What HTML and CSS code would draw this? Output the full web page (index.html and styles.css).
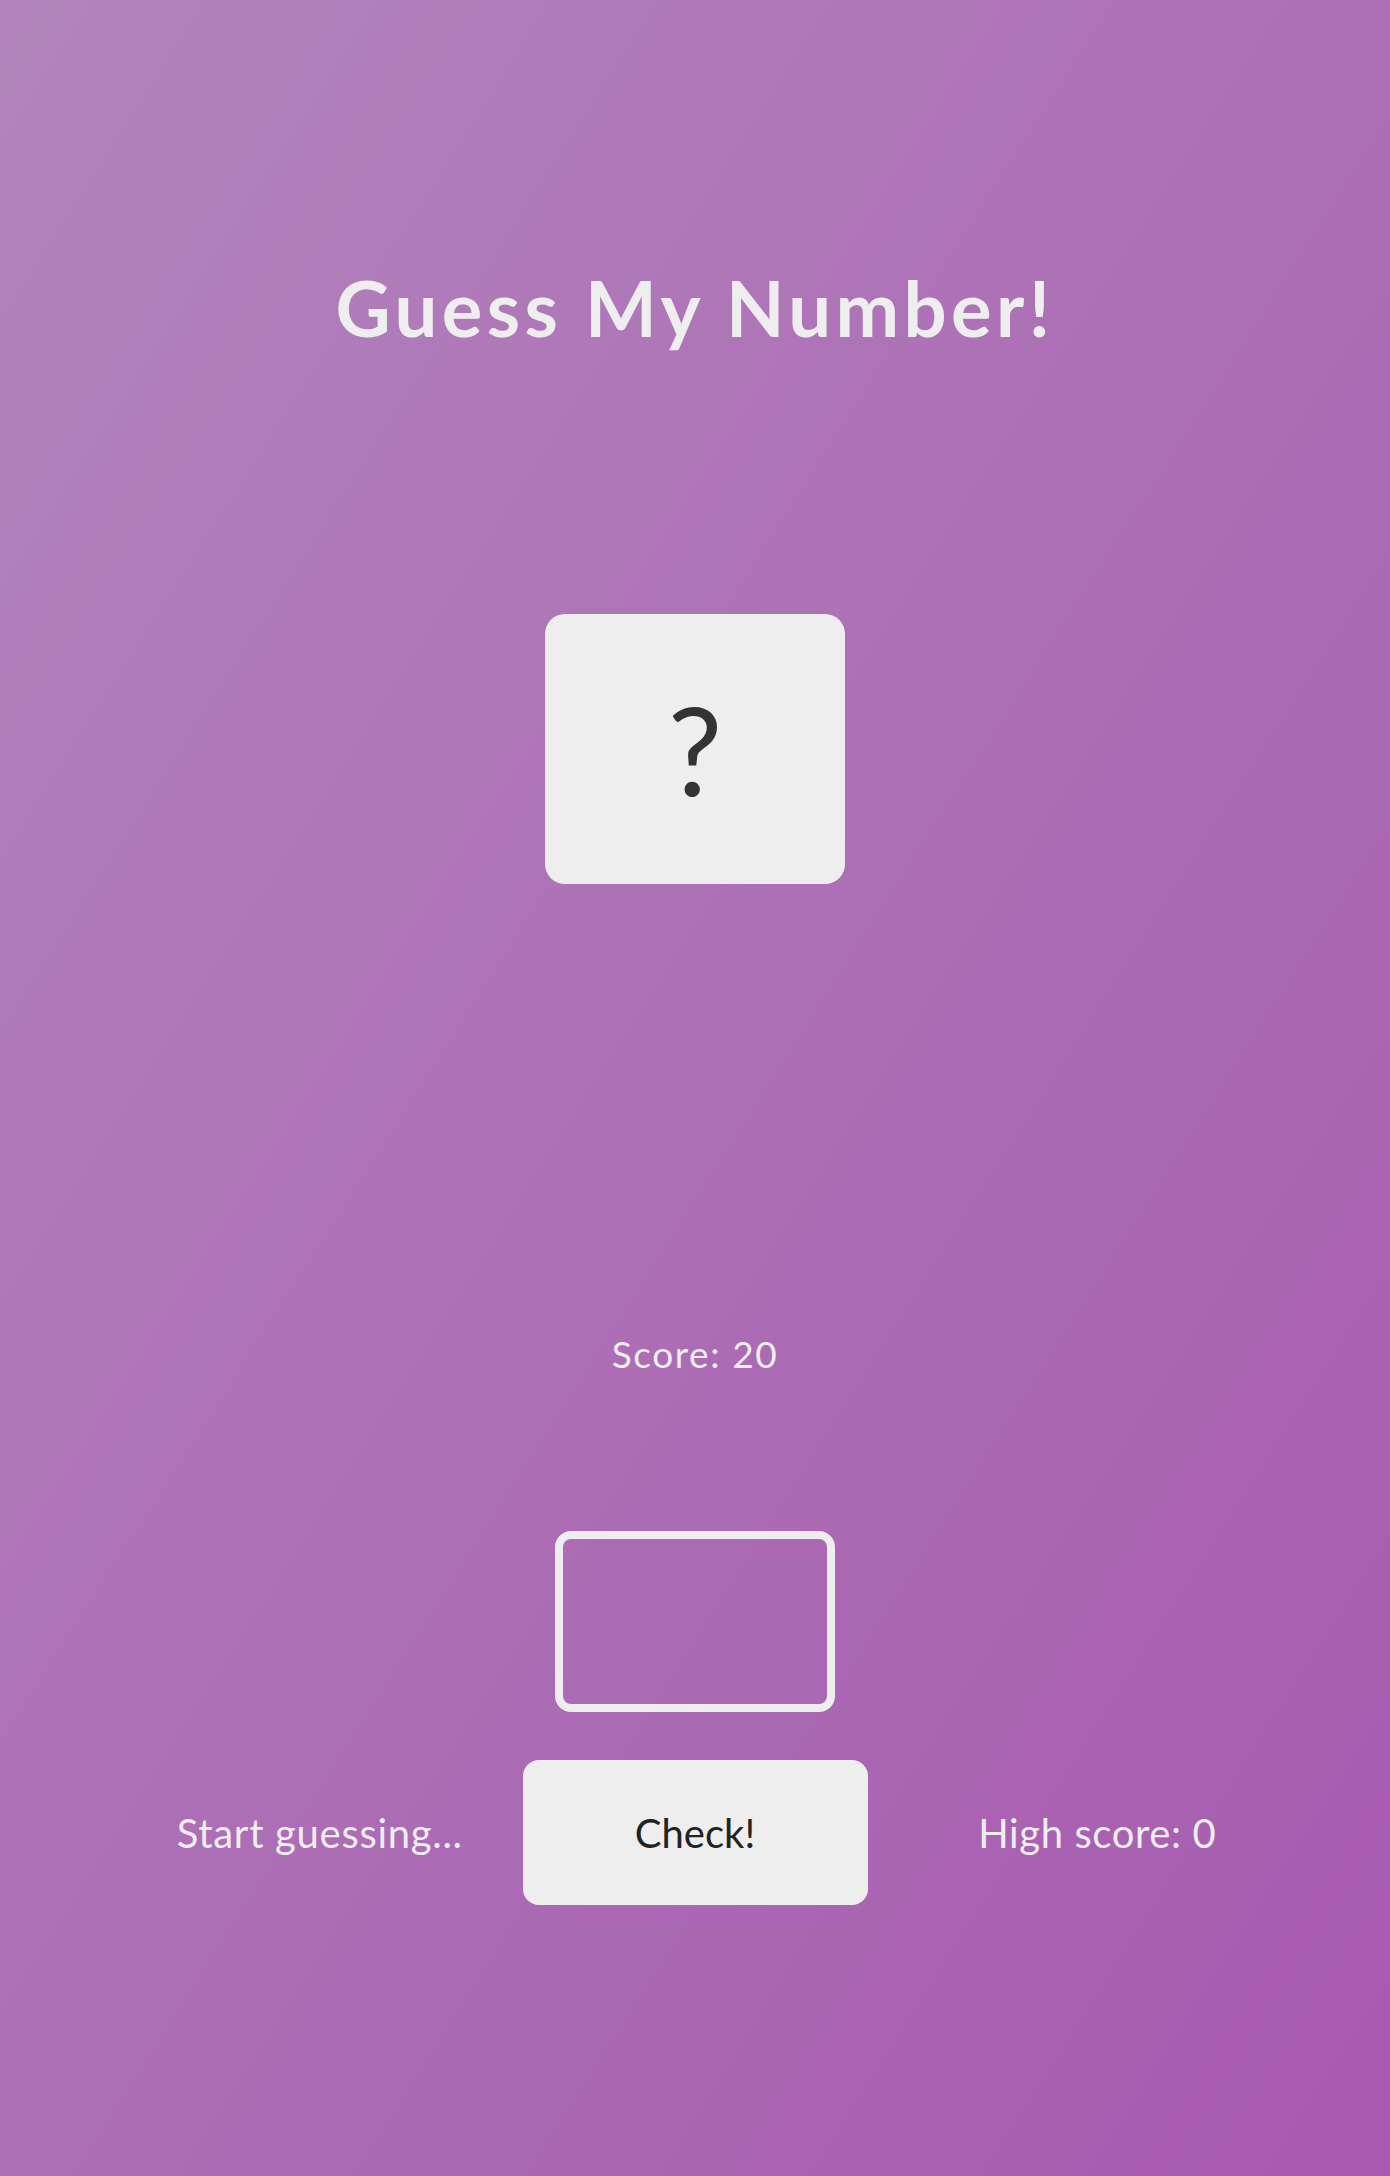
FILE: index.html
```html
<!DOCTYPE html>
<html lang="en">
<head>
<meta charset="UTF-8">
<title>Guess My Number!</title>
<link rel="stylesheet" href="styles.css">
</head>
<body>
<main class="page">
  <h1 class="title">Guess My Number!</h1>
  <div class="secret"><span class="secret-mark">?</span></div>
  <p class="score">Score: <span class="score-value">20</span></p>
  <input class="guess" type="number" aria-label="Your guess">
  <div class="controls">
    <p class="message">Start guessing...</p>
    <button class="check" type="button">Check!</button>
    <p class="highscore">High score: <span class="highscore-value">0</span></p>
  </div>
</main>
</body>
</html>
```

FILE: styles.css
```css
* {
  box-sizing: border-box;
}

html, body {
  margin: 0;
  padding: 0;
}

body {
  min-height: 2176px;
  background: linear-gradient(to bottom right, #b284bc, #a75aaf);
  font-family: Lato, "Open Sans", sans-serif;
  color: #eeeeee;
}

.page {
  display: flex;
  flex-direction: column;
  align-items: center;
}

.title {
  margin: 270px 0 0;
  font-size: 76px;
  line-height: 76px;
  font-weight: 700;
  letter-spacing: 4.4px;
  color: #eeeeee;
}

.secret {
  margin-top: 268px;
  width: 300px;
  height: 270px;
  border-radius: 20px;
  background: #eeeeee;
  display: flex;
  align-items: center;
  justify-content: center;
}

.secret-mark {
  font-size: 122px;
  line-height: 1;
  color: #333333;
  font-weight: 400;
}

.score {
  margin: 451px 0 0;
  font-size: 37px;
  line-height: 37px;
  letter-spacing: 1.6px;
}

.guess {
  margin-top: 159px;
  width: 280px;
  height: 181px;
  border: 8px solid #eeeeee;
  border-radius: 16px;
  background: transparent;
  color: #eeeeee;
  font-family: inherit;
  font-size: 80px;
  text-align: center;
  outline: none;
}

.controls {
  margin-top: 48px;
  width: 75%;
  display: grid;
  grid-template-columns: 1fr auto 1fr;
  align-items: center;
}

.message,
.highscore {
  margin: 0;
  font-size: 40px;
  line-height: 40px;
}

.message {
  justify-self: start;
  padding-left: 3px;
  letter-spacing: 0.7px;
}

.highscore {
  justify-self: end;
  letter-spacing: 0.6px;
}

.check {
  width: 345px;
  height: 145px;
  border: none;
  border-radius: 16px;
  background: #eeeeee;
  color: #222222;
  font-family: inherit;
  font-size: 40px;
  cursor: pointer;
}
```
